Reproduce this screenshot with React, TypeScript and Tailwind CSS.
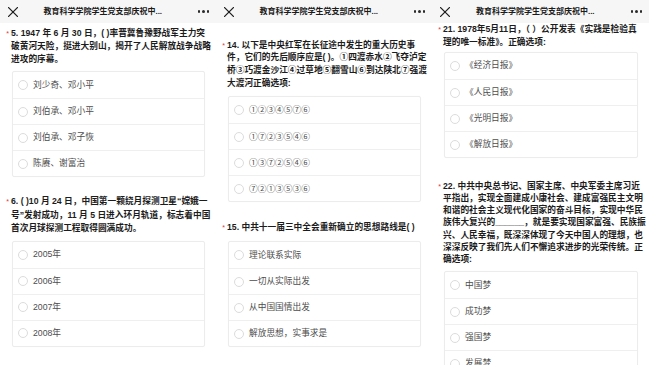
import type { ReactNode } from "react";

const FONT = { fontFamily: '"Liberation Sans", "Noto Sans CJK SC", sans-serif' };
const CJK = { fontFamily: '"Noto Sans CJK SC", sans-serif' };

type Q = {
  lines: string[];
  lh: number;
  mt: number;
};

type Opts = {
  items: string[];
  mt: number;
};

type Block = { q: Q; o: Opts };

const panels: Block[][] = [
  [
    {
      q: {
        lines: [
          "5. 1947 年 6 月 30 日，( )率晋冀鲁豫野战军主力突",
          "破黄河天险，挺进大别山，揭开了人民解放战争战略",
          "进攻的序幕。",
        ],
        lh: 13.3,
        mt: 3.5,
      },
      o: { items: ["刘少奇、邓小平", "刘伯承、邓小平", "刘伯承、邓子恢", "陈赓、谢富治"], mt: 5 },
    },
    {
      q: {
        lines: [
          "6. ( )10 月 24 日，中国第一颗绕月探测卫星“嫦娥一",
          "号”发射成功，11 月 5 日进入环月轨道，标志着中国",
          "首次月球探测工程取得圆满成功。",
        ],
        lh: 13.3,
        mt: 18,
      },
      o: { items: ["2005年", "2006年", "2007年", "2008年"], mt: 5.5 },
    },
  ],
  [
    {
      q: {
        lines: [
          "14. 以下是中央红军在长征途中发生的重大历史事",
          "件，它们的先后顺序应是( )。①四渡赤水②飞夺泸定",
          "桥③巧渡金沙江④过草地⑤翻雪山⑥到达陕北⑦强渡",
          "大渡河正确选项:",
        ],
        lh: 12.8,
        mt: 15.5,
      },
      o: { items: ["①②③④⑤⑦⑥", "①⑦②③⑤④⑥", "①③⑦②⑤④⑥", "⑦②①③⑤③⑥"], mt: 6.5 },
    },
    {
      q: {
        lines: ["15. 中共十一届三中全会重新确立的思想路线是( )"],
        lh: 13,
        mt: 19,
      },
      o: { items: ["理论联系实际", "一切从实际出发", "从中国国情出发", "解放思想，实事求是"], mt: 7 },
    },
  ],
  [
    {
      q: {
        lines: ["21. 1978年5月11日，（ ）公开发表《实践是检验真", "理的唯一标准》。正确选项:"],
        lh: 12.5,
        mt: 0,
      },
      o: { items: ["《经济日报》", "《人民日报》", "《光明日报》", "《解放日报》"], mt: 4 },
    },
    {
      q: {
        lines: [
          "22. 中共中央总书记、国家主席、中央军委主席习近",
          "平指出，实现全面建成小康社会、建成富强民主文明",
          "和谐的社会主义现代化国家的奋斗目标，实现中华民",
          "族伟大复兴的______，就是要实现国家富强、民族振",
          "兴、人民幸福，既深深体现了今天中国人的理想，也",
          "深深反映了我们先人们不懈追求进步的光荣传统。正",
          "确选项:",
        ],
        lh: 12.3,
        mt: 21.5,
      },
      o: { items: ["中国梦", "成功梦", "强国梦", "发展梦"], mt: 5.5 },
    },
  ],
];

// circled digits come from the CJK face so they all match
function withCircled(s: string): ReactNode[] {
  return s.split(/([①-⑦]+)/).map((part, i) =>
    /[①-⑦]/.test(part) ? (
      <span key={i} style={CJK}>
        {part}
      </span>
    ) : (
      part
    ),
  );
}

function Header() {
  return (
    <div className="h-[23px] shrink-0 bg-[#f6f6f6] flex items-center pl-[8px] pr-[7px]">
      <svg width="10" height="10" viewBox="0 0 10 10" className="shrink-0">
        <path d="M0.6 0.6 L9.4 9.4 M9.4 0.6 L0.6 9.4" stroke="#1f1f1f" strokeWidth="1.3" strokeLinecap="round" />
      </svg>
      <div className="flex-1 text-center pr-[10px] text-[8px] font-semibold text-[#1b1b1b] whitespace-nowrap">
        教育科学学院学生党支部庆祝中...
      </div>
      <div className="flex items-center gap-[2px]">
        <span className="w-[2.5px] h-[2.5px] rounded-full bg-[#2a2a2a]" />
        <span className="w-[2.5px] h-[2.5px] rounded-full bg-[#2a2a2a]" />
        <span className="w-[2.5px] h-[2.5px] rounded-full bg-[#2a2a2a]" />
      </div>
    </div>
  );
}

function Question({ q }: { q: Q }) {
  return (
    <div className="flex" style={{ marginTop: q.mt }}>
      <span className="w-[11px] shrink-0 text-right pr-[2px] text-[#e0383e] text-[7px] leading-[13px]">*</span>
      <div className="text-[8.7px] font-bold text-[#1c1c1c]">
        {q.lines.map((l, i) => (
          <div key={i} className="whitespace-nowrap" style={{ lineHeight: `${q.lh}px` }}>
            {withCircled(l)}
          </div>
        ))}
      </div>
    </div>
  );
}

function Options({ o }: { o: Opts }) {
  return (
    <div
      className="ml-[12px] mr-[11px] border border-[#ececec] rounded-[2px] shadow-[0_0_1px_rgba(0,0,0,0.04)]"
      style={{ marginTop: o.mt }}
    >
      {o.items.map((t, i) => (
        <div
          key={i}
          className={`h-[26px] flex items-center pl-[5px] gap-[5px] ${i > 0 ? "border-t border-[#efefef]" : ""}`}
        >
          <span className="w-[10px] h-[10px] rounded-full border border-[#dcdcdc] shrink-0" />
          <span className="text-[8.7px] text-[#4d4d4d] whitespace-nowrap">{withCircled(t)}</span>
        </div>
      ))}
    </div>
  );
}

function Panel({ blocks, last }: { blocks: Block[]; last?: boolean }) {
  const body: ReactNode[] = blocks.map((b, i) => (
    <div key={i}>
      <Question q={b.q} />
      <Options o={b.o} />
    </div>
  ));
  return (
    <div className={`${last ? "flex-1" : "w-[216px]"} h-[365px] overflow-hidden bg-white flex flex-col`}>
      <Header />
      <div>{body}</div>
    </div>
  );
}

export default function App() {
  return (
    <div className="w-[649px] h-[365px] overflow-hidden flex bg-white" style={FONT}>
      <Panel blocks={panels[0]} />
      <Panel blocks={panels[1]} />
      <Panel blocks={panels[2]} last />
    </div>
  );
}
